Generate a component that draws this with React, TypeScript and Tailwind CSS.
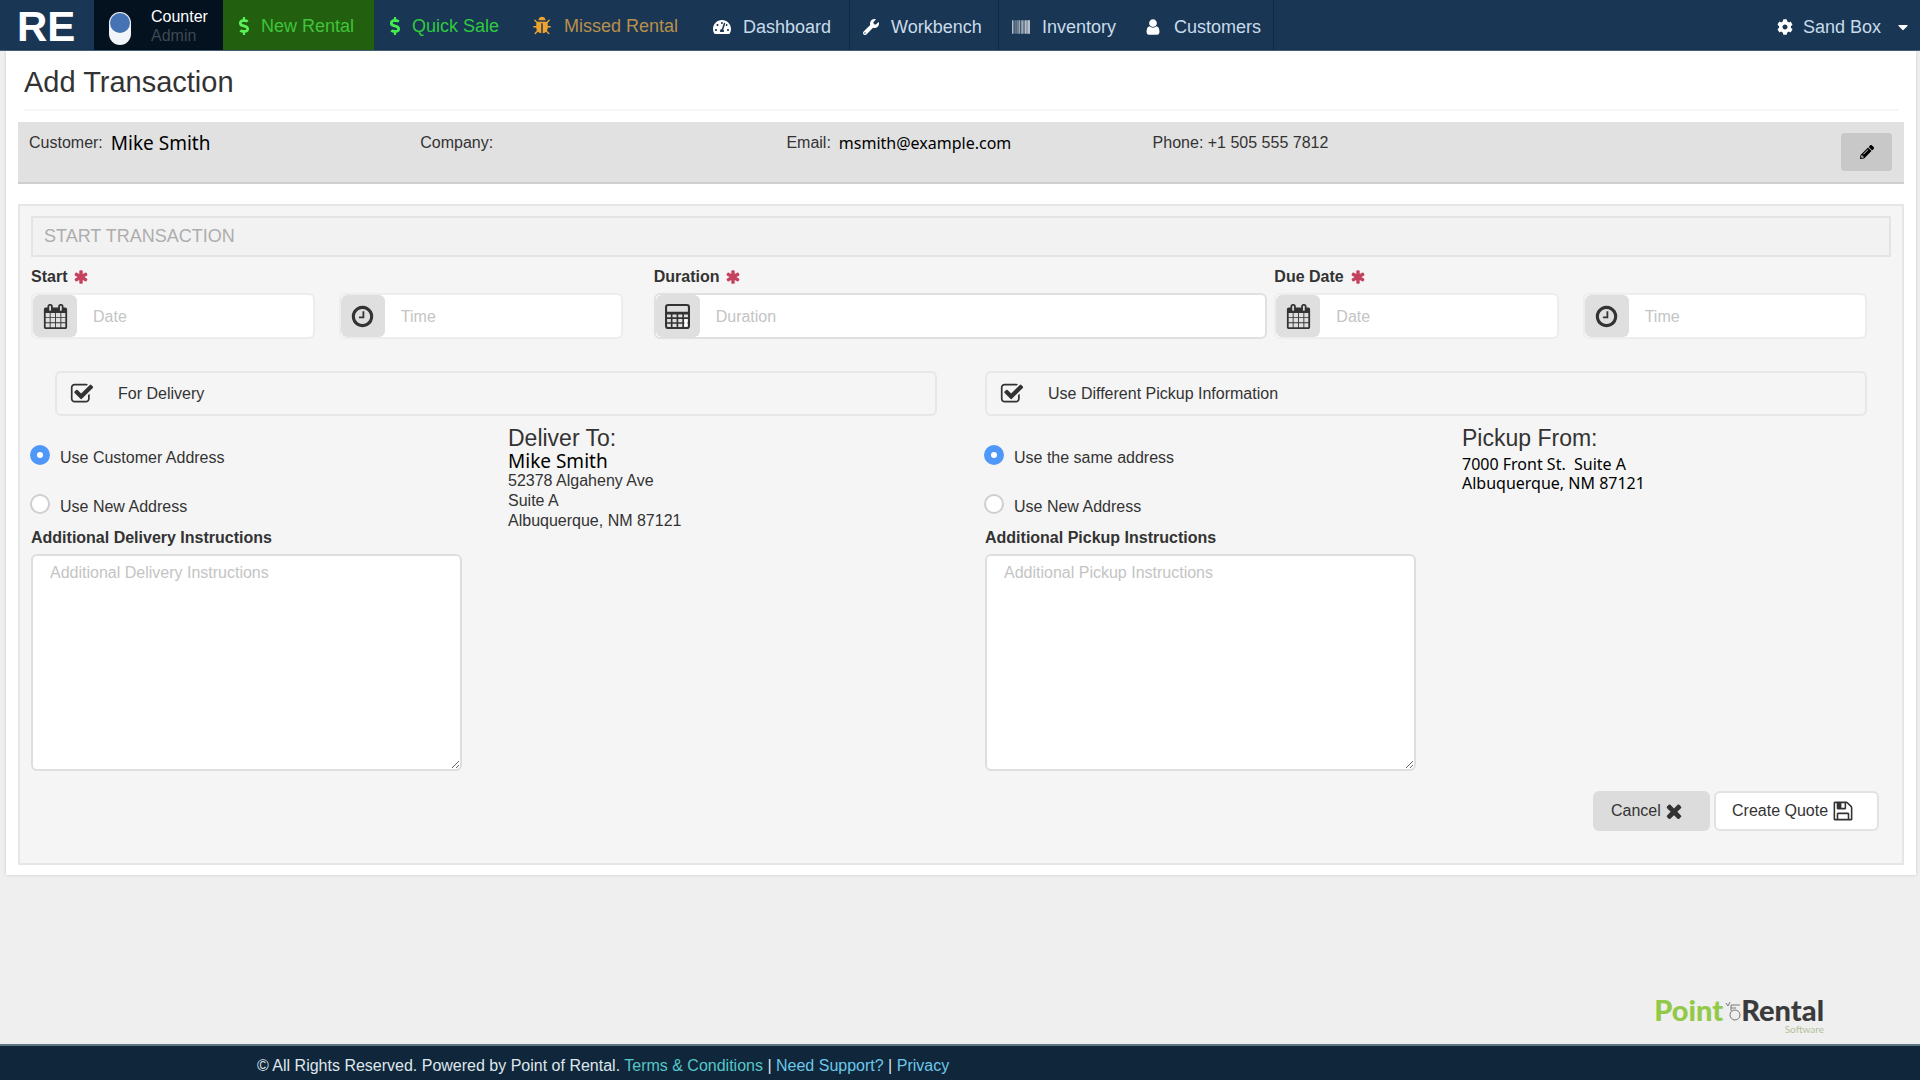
import React from "react";
import {
  FaBarcode,
  FaCaretDown,
  FaCog,
  FaDollarSign,
  FaPencilAlt,
  FaTachometerAlt,
  FaWrench,
} from "react-icons/fa";

// Font Awesome 4 glyphs, all on a 1792 grid
const glyphs = {
  calendar:
    "M192 1664h288v-288h-288v288zm352 0h320v-288h-320v288zm-352-352h288v-320h-288v320zm352 0h320v-320h-320v320zm-352-384h288v-288h-288v288zm736 736h320v-288h-320v288zm-384-736h320v-288h-320v288zm768 736h288v-288h-288v288zm-384-352h320v-320h-320v320zm-352-864v-288q0-13-9.5-22.5t-22.5-9.5h-64q-13 0-22.5 9.5t-9.5 22.5v288q0 13 9.5 22.5t22.5 9.5h64q13 0 22.5-9.5t9.5-22.5zm736 864h288v-320h-288v320zm-384-384h320v-288h-320v288zm384 0h288v-288h-288v288zm32-480v-288q0-13-9.5-22.5t-22.5-9.5h-64q-13 0-22.5 9.5t-9.5 22.5v288q0 13 9.5 22.5t22.5 9.5h64q13 0 22.5-9.5t9.5-22.5zm384-64v1280q0 52-38 90t-90 38h-1408q-52 0-90-38t-38-90v-1280q0-52 38-90t90-38h128v-96q0-66 47-113t113-47h64q66 0 113 47t47 113v96h384v-96q0-66 47-113t113-47h64q66 0 113 47t47 113v96h128q52 0 90 38t38 90z",
  clock:
    "M1024 544v448q0 14-9 23t-23 9h-320q-14 0-23-9t-9-23v-64q0-14 9-23t23-9h224v-352q0-14 9-23t23-9h64q14 0 23 9t9 23zm416 352q0-148-73-273t-198-198-273-73-273 73-198 198-73 273 73 273 198 198 273 73 273-73 198-198 73-273zm224 0q0 209-103 385.5t-279.5 279.5-385.5 103-385.5-103-279.5-279.5-103-385.5 103-385.5 279.5-279.5 385.5-103 385.5 103 279.5 279.5 103 385.5z",
  floppy:
    "M512 1536h768v-384h-768v384zm896 0h128v-896q0-14-10-38.5t-20-34.5l-281-281q-10-10-34-20t-39-10v416q0 40-28 68t-68 28h-576q-40 0-68-28t-28-68v-416h-128v1280h128v-416q0-40 28-68t68-28h832q40 0 68 28t28 68v416zm-384-928v-320q0-13-9.5-22.5t-22.5-9.5h-192q-13 0-22.5 9.5t-9.5 22.5v320q0 13 9.5 22.5t22.5 9.5h192q13 0 22.5-9.5t9.5-22.5zm640 32v928q0 40-28 68t-68 28h-1344q-40 0-68-28t-28-68v-1344q0-40 28-68t68-28h928q40 0 88 20t76 48l280 280q28 28 48 76t20 88z",
  check:
    "M1472 930v318q0 119-84.5 203.5t-203.5 84.5h-832q-119 0-203.5-84.5t-84.5-203.5v-832q0-119 84.5-203.5t203.5-84.5h832q63 0 117 25 15 7 18 23 3 17-9 29l-49 49q-10 10-23 10-3 0-9-2-23-6-45-6h-832q-66 0-113 47t-47 113v832q0 66 47 113t113 47h832q66 0 113-47t47-113v-254q0-13 9-22l64-64q10-10 23-10 6 0 12 3 20 8 20 29zm231-489l-814 814q-24 24-57 24t-57-24l-430-430q-24-24-24-57t24-57l110-110q24-24 57-24t57 24l263 263 647-647q24-24 57-24t57 24l110 110q24 24 24 57t-24 57z",
  asterisk:
    "M1546 1050q46 26 59.5 77.5t-12.5 97.5l-64 110q-26 46-77.5 59.5t-97.5-12.5l-266-153v307q0 52-38 90t-90 38h-128q-52 0-90-38t-38-90v-307l-266 153q-46 26-97.5 12.5t-77.5-59.5l-64-110q-26-46-12.5-97.5t59.5-77.5l266-154-266-154q-46-26-59.5-77.5t12.5-97.5l64-110q26-46 77.5-59.5t97.5 12.5l266 153v-307q0-52 38-90t90-38h128q52 0 90 38t38 90v307l266-153q46-26 97.5-12.5t77.5 59.5l64 110q26 46 12.5 97.5t-59.5 77.5l-266 154z",
  times:
    "M1490 1322q0 40-28 68l-136 136q-28 28-68 28t-68-28l-294-294-294 294q-28 28-68 28t-68-28l-136-136q-28-28-28-68t28-68l294-294-294-294q-28-28-28-68t28-68l136-136q28-28 68-28t68 28l294 294 294-294q28-28 68-28t68 28l136 136q28 28 28 68t-28 68l-294 294 294 294q28 28 28 68z",
  user: "M1536 1399q0 109-62.5 187t-150.5 78h-854q-88 0-150.5-78t-62.5-187q0-85 8.5-160.5t31.5-152 58.5-131 94-89 134.5-34.5q131 128 313 128t313-128q76 0 134.5 34.5t94 89 58.5 131 31.5 152 8.5 160.5zm-256-887q0 159-112.5 271.5t-271.5 112.5-271.5-112.5-112.5-271.5 112.5-271.5 271.5-112.5 271.5 112.5 112.5 271.5z",
  bug: "M1696 960q0 26-19 45t-45 19h-224q0 171-67 290l208 209q19 19 19 45t-19 45q-18 19-45 19t-45-19l-198-197q-5 5-15 13t-42 28.5-65 36.5-82 29-97 13v-896h-128v896q-51 0-101.5-13.5t-87-33-66-39-43.5-32.5l-15-14-183 207q-20 21-48 21-24 0-43-16-19-18-20.5-44.5t15.5-46.5l202-227q-58-114-58-274h-224q-26 0-45-19t-19-45 19-45 45-19h224v-294l-173-173q-19-19-19-45t19-45 45-19 45 19l173 173h844l173-173q19-19 45-19t45 19 19 45-19 45l-173 173v294h224q26 0 45 19t19 45zm-480-576h-640q0-133 93.5-226.5t226.5-93.5 226.5 93.5 93.5 226.5z",
};

function Glyph({ name, className }: { name: keyof typeof glyphs; className: string }) {
  return (
    <svg viewBox="0 0 1792 1792" className={className} fill="currentColor" aria-hidden="true">
      <path d={glyphs[name]} />
    </svg>
  );
}

function CalculatorIcon() {
  return (
    <svg viewBox="0 0 24 24" className="size-[25px]" fill="none" stroke="currentColor" strokeWidth="1.6" aria-hidden="true">
      <rect x="1" y="1" width="22" height="22" rx="2" strokeWidth="2" />
      <path d="M1 8.2h22M1 9.2h22M1 13.6h22M1 18.2h22M6.4 8v15M11.9 8v15M17.4 8v15" />
      <rect x="18.6" y="14.6" width="3" height="7" fill="#fff" stroke="none" />
    </svg>
  );
}

const links = [
  { label: "Dashboard", icon: <FaTachometerAlt className="size-[18px]" />, cls: "w-[150px] border-r border-[#0f2943]" },
  { label: "Workbench", icon: <FaWrench className="size-4" />, cls: "w-[149px] border-r border-[#0f2943]" },
  { label: "Inventory", icon: <FaBarcode className="size-[18px]" />, cls: "w-[132px]" },
  { label: "Customers", icon: <Glyph name="user" className="size-[18px]" />, cls: "w-[143px] border-r border-[#0f2943]" },
];

function Header() {
  return (
    <header className="flex h-[51px] items-stretch border-b border-[#4a637b] bg-[#193755] text-[#c9dbea]">
      <a href="#" className="flex w-[94px] items-center pt-1 pl-[17px] text-[42px] leading-none font-bold text-white">
        RE
      </a>
      <div className="flex w-[129px] bg-[#04121f] pl-[15px]">
        <button
          type="button"
          role="switch"
          aria-checked="true"
          aria-label="Counter mode"
          className="mt-3 flex h-[33px] w-[22px] items-start rounded-full bg-[#f1f4f8] p-px"
        >
          <span className="block size-5 rounded-full bg-[#4573b3]" />
        </button>
        <div className="ml-5 pt-[7px] text-base leading-[19px]">
          <p className="text-white">Counter</p>
          <p className="text-[#3d4854]">Admin</p>
        </div>
      </div>
      <nav className="flex flex-1 items-stretch text-lg">
        <a href="#" className="flex w-[151px] items-center gap-2 bg-[#22600f] pt-[2px] pl-3 text-[#3fc43a]">
          <FaDollarSign className="size-[18px] text-[#5cf058]" />
          New Rental
        </a>
        <a href="#" className="flex w-[148px] items-center gap-2 pt-[2px] pl-3 text-[#2fca3c]">
          <FaDollarSign className="size-[18px] text-[#45ee4f]" />
          Quick Sale
        </a>
        <a href="#" className="flex w-[178px] items-center gap-3 pt-[2px] pl-[10px] text-[#b98f4a]">
          <Glyph name="bug" className="size-5 text-[#eda32f]" />
          Missed Rental
        </a>
        {links.map((link) => (
          <a key={link.label} href="#" className={`flex items-center gap-3 pt-1 pl-[13px] ${link.cls}`}>
            <span className="text-white">{link.icon}</span>
            {link.label}
          </a>
        ))}
        <button type="button" className="ml-auto flex items-center pt-1 pr-[9px]">
          <FaCog className="size-4 text-white" />
          <span className="mr-[14px] ml-[10px]">Sand Box</span>
          <FaCaretDown className="size-4 text-white" />
        </button>
      </nav>
    </header>
  );
}

function CustomerBar() {
  return (
    <section className="flex h-[62px] border-b-2 border-[#cfcfcf] bg-[#e1e1e1] pl-[11px] text-base leading-5">
      <div className="grid flex-1 grid-cols-[391fr_366fr_366fr_688fr] pt-[11px]">
        <p className="flex items-center gap-2 self-start">
          Customer: <span className="font-['Noto_Sans',sans-serif] text-[19px] leading-5 text-black">Mike Smith</span>
        </p>
        <p>Company:</p>
        <p className="flex items-center gap-2 self-start">
          Email: <span className="font-['Noto_Sans',sans-serif] leading-5 text-black">msmith@example.com</span>
        </p>
        <p>Phone: +1 505 555 7812</p>
      </div>
      <button
        type="button"
        aria-label="Edit customer"
        className="mt-[11px] mr-3 flex h-[38px] w-[51px] items-center justify-center rounded bg-[#c8c8c8] text-black"
      >
        <FaPencilAlt className="size-[14px]" />
      </button>
    </section>
  );
}

function IconInput({ id, label, placeholder, icon, strong }: {
  id: string;
  label: string;
  placeholder: string;
  icon: React.ReactNode;
  strong?: boolean;
}) {
  return (
    <div className={`flex h-[46px] min-w-0 flex-1 rounded-md border-2 bg-white ${strong ? "border-[#e0e0e0]" : "border-[#ededed]"}`}>
      <span className="flex w-11 shrink-0 items-center justify-center rounded-md bg-[#dfdfdf] text-[#333]">{icon}</span>
      <input
        id={id}
        type="text"
        aria-label={label}
        placeholder={placeholder}
        className="min-w-0 flex-1 px-4 pt-[2px] text-base outline-none placeholder:text-[#c4c4c4]"
      />
    </div>
  );
}

function FieldLabel({ htmlFor, children }: { htmlFor: string; children: React.ReactNode }) {
  return (
    <label htmlFor={htmlFor} className="flex items-center gap-[6px] text-base leading-5 font-bold">
      {children}
      <Glyph name="asterisk" className="size-4 text-[#c5425f]" />
    </label>
  );
}

function AddressColumn({ id, title, options, notes, heading, indent, children }: {
  id: string;
  title: string;
  options: string[];
  notes: string;
  heading: string;
  indent?: boolean;
  children: React.ReactNode;
}) {
  return (
    <div className="min-w-0">
      <label className={`flex h-[45px] items-center rounded-md border-2 border-[#e7e7e7] pl-[13px] text-base ${indent ? "ml-6" : ""}`}>
        <span className="relative size-6">
          <input type="checkbox" defaultChecked className="peer block size-6 appearance-none" />
          <span className="pointer-events-none absolute inset-0 opacity-30 peer-checked:opacity-100">
            <Glyph name="check" className="size-6" />
          </span>
        </span>
        <span className="ml-6">{title}</span>
      </label>
      <div className="flex">
        <div className="w-[477px]">
          <div className="-ml-px flex flex-col pt-4">
            {options.map((option, i) => (
              <label key={option} className="flex h-[49px] items-center gap-[10px] pt-[2px] text-base">
                <input
                  type="radio"
                  name={id}
                  defaultChecked={i === 0}
                  className="mb-[6px] size-5 appearance-none rounded-full border-2 border-[#cfcfcf] bg-white checked:border-[7px] checked:border-[#4f98f8]"
                />
                {option}
              </label>
            ))}
          </div>
          <label htmlFor={`${id}-notes`} className="-mt-[2px] block text-base leading-5 font-bold">
            {notes}
          </label>
          <textarea
            id={`${id}-notes`}
            placeholder={notes}
            className="mt-[6px] block h-[217px] w-[431px] resize rounded-md border-2 border-[#dedede] bg-white px-[17px] py-[7px] text-base leading-5 outline-none placeholder:text-[#c4c4c4]"
          />
        </div>
        <div className="pt-[9px] text-base leading-5">
          <h3 className="text-[23px] leading-[26px]">{heading}</h3>
          {children}
        </div>
      </div>
    </div>
  );
}

export default function App() {
  return (
    <div className="flex min-h-screen flex-col bg-[#efefef] text-[#333] font-['Liberation_Sans',Arial,sans-serif]">
      <Header />
      <main className="mr-1 ml-[6px] bg-white px-3 pb-[10px] shadow-[0_0_3px_rgba(0,0,0,0.15)]">
        <h1 className="mx-[6px] border-b-2 border-[#f5f5f5] pt-[14px] pb-[10px] text-[29px] leading-[34px]">Add Transaction</h1>
        <div className="pt-[11px]">
          <CustomerBar />
        </div>

        <section className="mt-5 border-2 border-[#e6e6e6] bg-[#f5f5f5] pt-[10px] pb-8 pl-[11px]">
          <h2 className="mr-[11px] flex h-[41px] items-center border-2 border-[#e4e4e4] bg-[#f2f2f2] px-[11px] pb-[2px] text-lg text-[#adadad]">
            START TRANSACTION
          </h2>

          <form onSubmit={(e) => e.preventDefault()} className="pr-[35px]">
            <div className="grid grid-cols-[622fr_620fr_592fr] pt-[10px]">
              <div className="min-w-0 pr-[31px]">
                <FieldLabel htmlFor="start-date">Start</FieldLabel>
                <div className="mt-[6px] flex gap-6">
                  <IconInput id="start-date" label="Start date" placeholder="Date" icon={<Glyph name="calendar" className="size-[25px]" />} />
                  <IconInput id="start-time" label="Start time" placeholder="Time" icon={<Glyph name="clock" className="size-[25px]" />} />
                </div>
              </div>
              <div className="min-w-0 pr-[7px]">
                <FieldLabel htmlFor="duration">Duration</FieldLabel>
                <div className="mt-[6px] flex">
                  <IconInput id="duration" label="Duration" placeholder="Duration" icon={<CalculatorIcon />} strong />
                </div>
              </div>
              <div className="min-w-0">
                <FieldLabel htmlFor="due-date">Due Date</FieldLabel>
                <div className="mt-[6px] flex gap-6">
                  <IconInput id="due-date" label="Due date" placeholder="Date" icon={<Glyph name="calendar" className="size-[25px]" />} />
                  <IconInput id="due-time" label="Due time" placeholder="Time" icon={<Glyph name="clock" className="size-[25px]" />} />
                </div>
              </div>
            </div>

            <div className="mt-8 grid grid-cols-[906fr_882fr] gap-12">
              <AddressColumn
                id="delivery"
                title="For Delivery"
                options={["Use Customer Address", "Use New Address"]}
                notes="Additional Delivery Instructions"
                heading="Deliver To:"
                indent
              >
                <p className="font-['Noto_Sans',sans-serif] text-[19px] leading-5 text-black">Mike Smith</p>
                <p>52378 Algaheny Ave</p>
                <p>Suite A</p>
                <p>Albuquerque, NM 87121</p>
              </AddressColumn>
              <AddressColumn
                id="pickup"
                title="Use Different Pickup Information"
                options={["Use the same address", "Use New Address"]}
                notes="Additional Pickup Instructions"
                heading="Pickup From:"
              >
                <div className="pt-1 font-['Noto_Sans',sans-serif] leading-[19px] whitespace-pre text-black">
                  <p>7000 Front St.  Suite A</p>
                  <p>Albuquerque, NM 87121</p>
                </div>
              </AddressColumn>
            </div>

            <div className="-mr-3 mt-5 flex justify-end gap-1 text-base">
              <button type="button" className="flex h-10 w-[117px] items-center gap-[2px] rounded-md bg-[#dcdcdc] pl-[18px]">
                Cancel
                <Glyph name="times" className="size-[22px]" />
              </button>
              <button type="submit" className="flex h-10 w-[165px] items-center gap-1 rounded-md border-2 border-[#e2e2e2] bg-white pl-4">
                Create Quote
                <Glyph name="floppy" className="size-[22px]" />
              </button>
            </div>
          </form>
        </section>
      </main>

      <div className="mt-auto flex justify-end pr-24 pb-[10px]">
        <a href="#" aria-label="Point of Rental Software" className="block font-['Lato',sans-serif]">
          <span className="flex items-center text-[29px] leading-7 font-black">
            <span className="text-[#93c948]">Point</span>
            <svg viewBox="0 0 18 24" className="h-6 w-[18px]" fill="none" stroke="#777" aria-hidden="true">
              <circle cx="12" cy="17" r="5" />
              <path d="M3 5l2 3 2-4M8 13V7h9M8 10h5" />
            </svg>
            <span className="text-[#3b3b3b]">Rental</span>
          </span>
          <span className="block text-right text-[10px] leading-[10px] text-[#b3bf9a]">Software</span>
        </a>
      </div>
      <footer className="h-9 border-t-2 border-[#5d7483] bg-[#10263a] pt-[10px] pl-[257px] text-base leading-5 text-[#dfe7ed]">
        © All Rights Reserved. Powered by Point of Rental.{" "}
        <a href="#" className="text-[#55c7c9]">Terms & Conditions</a> |{" "}
        <a href="#" className="text-[#6cc8ea]">Need Support?</a> |{" "}
        <a href="#" className="text-[#6cc8ea]">Privacy</a>
      </footer>
    </div>
  );
}
